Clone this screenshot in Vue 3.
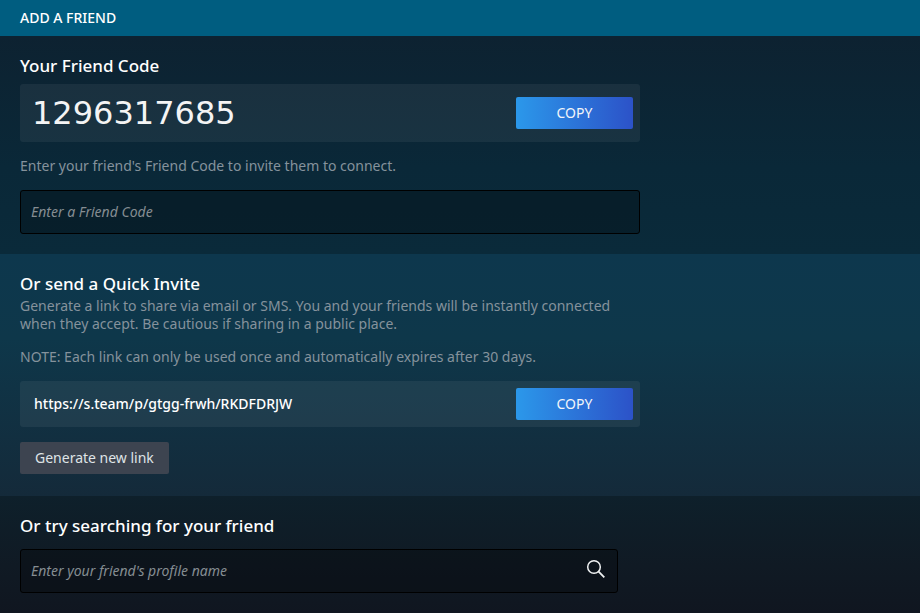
<script setup>
import { ref } from 'vue'

const friendCode = '1296317685'
const inviteLink = 'https://s.team/p/gtgg-frwh/RKDFDRJW'
const codeInput = ref('')
const profileName = ref('')

function copy(text) {
  navigator.clipboard?.writeText(text)
}
</script>

<template>
  <main class="page">
    <header class="header">
      <h1>Add a friend</h1>
    </header>

    <section class="section">
      <h2><label for="friend-code">Your Friend Code</label></h2>
      <div class="card card-code">
        <span class="code">{{ friendCode }}</span>
        <button type="button" class="copy" @click="copy(friendCode)">COPY</button>
      </div>
      <p class="hint">Enter your friend's Friend Code to invite them to connect.</p>
      <div class="field">
        <input id="friend-code" v-model="codeInput" type="text" placeholder="Enter a Friend Code" />
      </div>
    </section>

    <section class="section invite">
      <h2>Or send a Quick Invite</h2>
      <p>Generate a link to share via email or SMS. You and your friends will be instantly connected when they accept. Be cautious if sharing in a public place.</p>
      <p class="note">NOTE: Each link can only be used once and automatically expires after 30 days.</p>
      <div class="card card-link">
        <span class="link">{{ inviteLink }}</span>
        <button type="button" class="copy" @click="copy(inviteLink)">COPY</button>
      </div>
      <button type="button" class="generate">Generate new link</button>
    </section>

    <section class="section search">
      <h2><label for="profile-name">Or try searching for your friend</label></h2>
      <form class="field field-search" @submit.prevent>
        <input id="profile-name" v-model="profileName" type="text" placeholder="Enter your friend's profile name" />
        <button type="submit" class="search-button" aria-label="Search">
          <svg viewBox="0 0 20 20" width="20" height="20" fill="none" stroke="currentColor">
            <circle cx="8" cy="8" r="6.3" stroke-width="1.5" />
            <path d="M12.4 12.4L18.3 18.3" stroke-width="1.8" />
          </svg>
        </button>
      </form>
    </section>
  </main>
</template>

<style>
body {
  margin: 0;
  background: #101620;
}
</style>

<style scoped>
* {
  box-sizing: border-box;
}

.page {
  display: flex;
  flex-direction: column;
  min-height: 100vh;
  font-family: "Noto Sans", "Liberation Sans", sans-serif;
  font-size: 14px;
  line-height: 18px;
  color: #85929c;
}

h1,
h2,
p {
  margin: 0;
}

.header {
  padding: 9px 20px;
  background: #005d80;
}

h1 {
  font-size: 14px;
  font-weight: 500;
  line-height: 18px;
  text-transform: uppercase;
  color: #fff;
}

.section {
  display: flex;
  flex-direction: column;
  align-items: flex-start;
  padding: 18px 20px 20px;
  background: linear-gradient(#0d2231, #0a2838 60%, #0a2a3a);
}

.section > * {
  width: 100%;
  max-width: 620px;
}

h2 {
  font-size: 17px;
  font-weight: 500;
  line-height: 24px;
  color: #fff;
}

.card {
  display: flex;
  align-items: center;
  justify-content: space-between;
  padding: 0 7px 0 14px;
  border-radius: 3px;
  background: rgba(255, 255, 255, 0.06);
  color: #fff;
}

.card-code {
  height: 58px;
  margin-top: 6px;
  padding-left: 12px;
}

.code {
  font-family: "DejaVu Sans", sans-serif;
  font-size: 32px;
  line-height: 40px;
  color: #f4f4f4;
}

button {
  padding: 0;
  border: 0;
  font: inherit;
  cursor: pointer;
}

.copy {
  width: 117px;
  height: 32px;
  border-radius: 2px;
  background: linear-gradient(90deg, #2b98ea, #2c52c8);
  color: #f2f5fa;
}

.hint {
  margin: 15px 0;
}

.field {
  display: flex;
  height: 44px;
  border: 1px solid #000;
  border-radius: 3px;
  background: rgba(0, 0, 0, 0.25);
}

.field input {
  flex: 1;
  min-width: 0;
  padding: 0 10px;
  border: 0;
  outline: 0;
  background: none;
  font: inherit;
  color: #fff;
}

.field input::placeholder {
  font-style: italic;
  color: #858d92;
  opacity: 1;
}

.invite {
  padding-bottom: 22px;
  background: linear-gradient(#0d374d, #0e374a 35%, #142a3a);
}

.invite h2 {
  margin-bottom: 1px;
}

.note {
  margin: 15px 0;
}

.card-link {
  height: 46px;
}

.link {
  font-weight: 500;
}

.section > .generate {
  width: auto;
  height: 32px;
  margin-top: 15px;
  padding: 0 15px;
  border-radius: 2px;
  background: #3d4450;
  color: #dfe3e6;
}

.search {
  flex: 1;
  background: linear-gradient(#0e202b, #101a24 60%, #101620);
}

.section > .field-search {
  max-width: 598px;
  margin-top: 11px;
}

.search-button {
  display: flex;
  align-items: center;
  justify-content: center;
  width: 42px;
  padding-bottom: 4px;
  background: none;
  color: #f0f2f3;
}
</style>
